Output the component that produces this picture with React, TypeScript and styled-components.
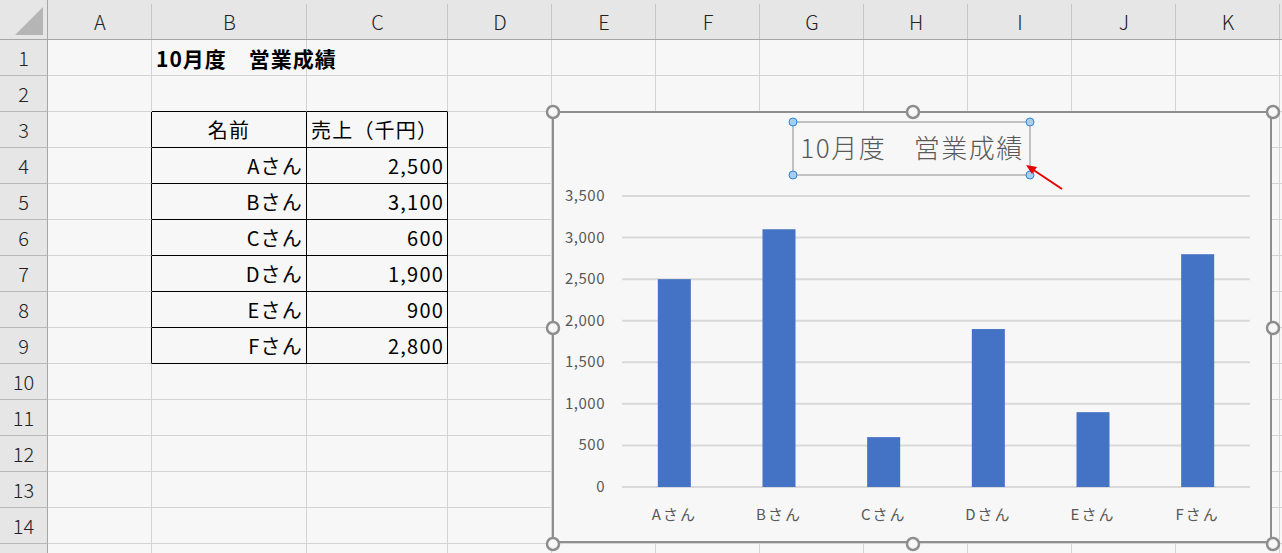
import React from "react";
import styled, { createGlobalStyle } from "styled-components";

const GlobalStyle = createGlobalStyle`
  html, body {
    margin: 0;
    padding: 0;
    background: #f7f7f7;
    overflow: hidden;
  }
  body {
    font-family: "Noto Sans CJK JP", "Noto Sans", sans-serif;
  }
`;

const COLS = ["A", "B", "C", "D", "E", "F", "G", "H", "I", "J", "K"];
const COL_WIDTHS = [104, 155, 141, 104, 104, 104, 104, 104, 104, 104, 104];

const Sheet = styled.div`
  position: relative;
  width: 1282px;
  height: 553px;
  overflow: hidden;
  display: grid;
  grid-template-columns: 48px ${COL_WIDTHS.map((w) => `${w}px`).join(" ")} 40px;
  grid-template-rows: 40px repeat(15, 36px);
  background: #f7f7f7;
`;

const Corner = styled.div`
  position: relative;
  background: #e6e6e6;
  border-right: 1px solid #a6a6a6;
  border-bottom: 1px solid #a6a6a6;
  box-sizing: border-box;

  &::after {
    content: "";
    position: absolute;
    right: 4px;
    bottom: 4px;
    width: 0;
    height: 0;
    border-left: 28px solid transparent;
    border-bottom: 28px solid #b5b5b5;
  }
`;

const ColHead = styled.div`
  background: #e6e6e6;
  border-bottom: 1px solid #a6a6a6;
  box-sizing: border-box;
  display: flex;
  align-items: center;
  justify-content: center;
  font-size: 20px;
  font-weight: 300;
  color: #222;
  padding-top: 4px;
  position: relative;

  &::after {
    content: "";
    position: absolute;
    right: 0;
    top: 4px;
    bottom: 0;
    border-right: 1px solid #c6c6c6;
  }
`;

const RowHead = styled.div`
  background: #e6e6e6;
  border-right: 1px solid #a6a6a6;
  border-bottom: 1px solid #b8b8b8;
  box-sizing: border-box;
  display: flex;
  align-items: center;
  justify-content: center;
  font-size: 20px;
  font-weight: 300;
  color: #222;
`;

const Cell = styled.div<{ $rb?: boolean; $bb?: boolean; $align?: string; $bold?: boolean }>`
  box-sizing: border-box;
  border-right: 1px solid ${(p) => (p.$rb ? "#000" : "#d4d4d4")};
  border-bottom: 1px solid ${(p) => (p.$bb ? "#000" : "#d4d4d4")};
  display: flex;
  align-items: center;
  justify-content: ${(p) => p.$align || "flex-start"};
  padding: 0 ${(p) => (p.$align === "flex-end" ? "3px" : "4px")} 0 4px;
  font-size: ${(p) => (p.$bold ? "21px" : "20px")};
  letter-spacing: ${(p) => (p.$bold ? "1px" : "1.2px")};
  font-weight: ${(p) => (p.$bold ? 700 : 400)};
  color: #000;
  white-space: nowrap;
  overflow: visible;
`;

const ChartFrame = styled.div`
  position: absolute;
  left: 552px;
  top: 111px;
  width: 720px;
  height: 432px;
  box-sizing: border-box;
  border: 2px solid #8e8e8e;
  background: #f7f7f7;
`;

const ChartSvg = styled.svg`
  position: absolute;
  left: -2px;
  top: -2px;
  overflow: visible;
  font-family: "Noto Sans CJK JP", "Noto Sans", sans-serif;
`;

const names = ["Aさん", "Bさん", "Cさん", "Dさん", "Eさん", "Fさん"];
const sales = [2500, 3100, 600, 1900, 900, 2800];

const Chart = () => {
  const plotLeft = 70;
  const plotRight = 698;
  const zeroY = 376;
  const step = 41.57;
  const catW = (plotRight - plotLeft) / names.length;
  const barW = 33;
  const ticks = [0, 500, 1000, 1500, 2000, 2500, 3000, 3500];
  const yOf = (v: number) => zeroY - (v / 500) * step;

  const handles: [number, number][] = [
    [0, 0], [360, 0], [720, 0],
    [0, 216], [720, 216],
    [0, 432], [360, 432], [720, 432],
  ];
  const titleBox = { x: 241, y: 11, w: 237, h: 53 };
  const blue: [number, number][] = [
    [titleBox.x, titleBox.y],
    [titleBox.x + titleBox.w, titleBox.y],
    [titleBox.x, titleBox.y + titleBox.h],
    [titleBox.x + titleBox.w, titleBox.y + titleBox.h],
  ];

  return (
    <ChartFrame>
      <ChartSvg width={720} height={432} viewBox="0 0 720 432">
        {ticks.map((t) => (
          <g key={t}>
            <line x1={plotLeft} x2={plotRight} y1={yOf(t)} y2={yOf(t)} stroke="#d9d9d9" strokeWidth={2} />
            <text x={53} y={yOf(t) + 5} textAnchor="end" fontSize={15} letterSpacing={0.5} fill="#595959">
              {t.toLocaleString("en-US")}
            </text>
          </g>
        ))}
        {sales.map((v, i) => {
          const cx = plotLeft + catW * (i + 0.5);
          return (
            <g key={names[i]}>
              <rect x={cx - barW / 2} y={yOf(v)} width={barW} height={zeroY - yOf(v)} fill="#4472c4" />
              <text x={cx} y={409} textAnchor="middle" fontSize={15} letterSpacing={2} fill="#595959">
                {names[i]}
              </text>
            </g>
          );
        })}
        <rect
          x={titleBox.x}
          y={titleBox.y}
          width={titleBox.w}
          height={titleBox.h}
          fill="none"
          stroke="#8c8c8c"
          strokeWidth={1}
        />
        <text x={360} y={47} textAnchor="middle" fontSize={26} fontWeight={300} letterSpacing={1.5} fill="#595959">
          10月度　営業成績
        </text>
        {blue.map(([x, y], i) => (
          <circle key={i} cx={x} cy={y} r={4} fill="#a8cdf1" stroke="#2f87d8" strokeWidth={1} />
        ))}
        <line x1={510} y1={78} x2={480} y2={58} stroke="#e60000" strokeWidth={2} />
        <polygon points="474,54 485,56 480,63" fill="#e60000" />
        {handles.map(([x, y], i) => (
          <circle key={i} cx={x + 1} cy={y + 1} r={6} fill="#f7f7f7" stroke="#8e8e8e" strokeWidth={2.5} />
        ))}
      </ChartSvg>
    </ChartFrame>
  );
};

type CellData = { text?: string; align?: string; bold?: boolean };

const cellAt = (row: number, col: number): CellData => {
  if (row === 1 && col === 1) return { text: "10月度　営業成績", bold: true };
  if (row === 3 && col === 1) return { text: "名前", align: "center" };
  if (row === 3 && col === 2) return { text: "売上（千円）" };
  if (row >= 4 && row <= 9) {
    const i = row - 4;
    if (col === 1) return { text: names[i], align: "flex-end" };
    if (col === 2) return { text: sales[i].toLocaleString("en-US"), align: "flex-end" };
  }
  return {};
};

const App = () => {
  const rows = Array.from({ length: 15 }, (_, i) => i + 1);
  return (
    <>
      <GlobalStyle />
      <Sheet>
        <Corner />
        {COLS.map((c) => (
          <ColHead key={c}>{c}</ColHead>
        ))}
        <ColHead />
        {rows.map((r) => (
          <React.Fragment key={r}>
            <RowHead>{r <= 14 ? r : ""}</RowHead>
            {[...COLS, ""].map((c, ci) => {
              const d = cellAt(r, ci);
              const inTable = r >= 3 && r <= 9;
              const rb = inTable && ci >= 0 && ci <= 2;
              const bb = r >= 2 && r <= 9 && (ci === 1 || ci === 2);
              return (
                <Cell key={ci} $rb={rb} $bb={bb} $align={d.align} $bold={d.bold}>
                  {d.text}
                </Cell>
              );
            })}
          </React.Fragment>
        ))}
        <Chart />
      </Sheet>
    </>
  );
};

export default App;
